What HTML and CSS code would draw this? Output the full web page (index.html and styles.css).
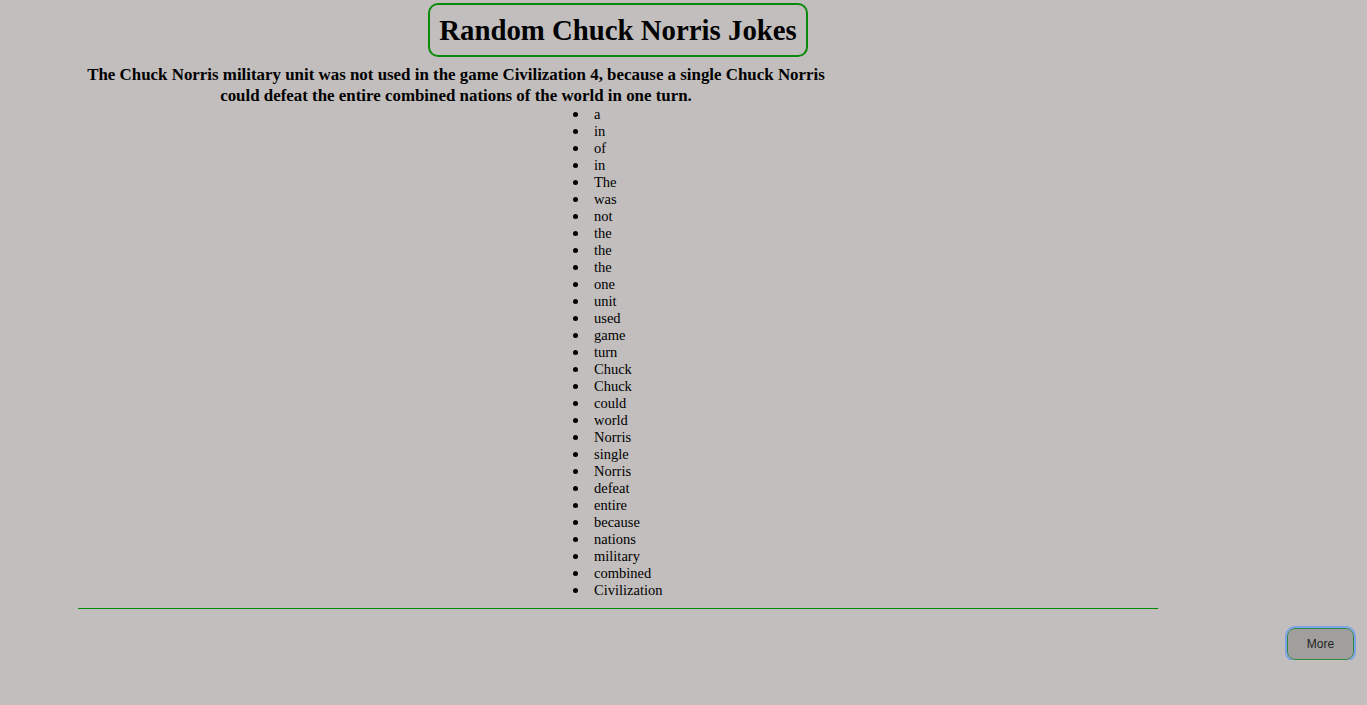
FILE: index.html
```html
<!DOCTYPE html>
<html>
<head>
<meta charset="utf-8">
<link rel="stylesheet" href="styles.css">
</head>
<body>
<div class="page">
  <div class="title-wrap"><h1 class="title">Random Chuck Norris Jokes</h1></div>
  <h4 class="joke">The Chuck Norris military unit was not used in the game Civilization 4, because a single Chuck Norris could defeat the entire combined nations of the world in one turn.</h4>
  <ul class="words">
    <li>a</li><li>in</li><li>of</li><li>in</li><li>The</li><li>was</li><li>not</li><li>the</li><li>the</li><li>the</li><li>one</li><li>unit</li><li>used</li><li>game</li><li>turn</li><li>Chuck</li><li>Chuck</li><li>could</li><li>world</li><li>Norris</li><li>single</li><li>Norris</li><li>defeat</li><li>entire</li><li>because</li><li>nations</li><li>military</li><li>combined</li><li>Civilization</li>
  </ul>
  <hr class="rule">
</div>
<div class="actions"><button class="more">More</button></div>
</body>
</html>
```
FILE: styles.css
```css
html, body {
  margin: 0;
  padding: 0;
  background: #c2bebd;
  font-family: "Liberation Serif", "Times New Roman", serif;
  color: #000;
}
.page {
  width: 1080px;
  margin-left: 78px;
  padding-top: 3px;
}
.title-wrap {
  text-align: center;
}
.title {
  display: inline-block;
  margin: 0;
  padding: 0 9px;
  border: 2px solid #098a09;
  border-radius: 10px;
  font-size: 28.8px;
  line-height: 50px;
  font-weight: bold;
}
.joke {
  width: 70%;
  margin: 8px 0 0;
  text-align: center;
  font-size: 16.9px;
  line-height: 20.5px;
  font-weight: bold;
}
.words {
  margin: 0;
  padding-left: 516px;
  font-size: 14.5px;
  line-height: 17px;
  list-style: none;
}
.words li {
  display: flex;
  align-items: center;
}
.words li::before {
  content: "";
  width: 5px;
  height: 5px;
  border-radius: 50%;
  background: #000;
  margin-left: -21px;
  margin-right: 16px;
  flex: none;
}
.rule {
  margin: 9px 0 0;
  border: 0;
  border-top: 1px solid #008a00;
  height: 0;
}
.actions {
  display: flex;
  justify-content: flex-end;
  padding: 19px 13px 0 0;
}
.more {
  width: 67px;
  height: 32px;
  background: #a19f9e;
  border: 1px solid #2e8b3e;
  border-radius: 8px;
  outline: 2px solid #7ea2e8;
  outline-offset: 0;
  font-family: "Liberation Sans", Arial, sans-serif;
  font-size: 12px;
  color: #222;
  padding: 0;
}
```
